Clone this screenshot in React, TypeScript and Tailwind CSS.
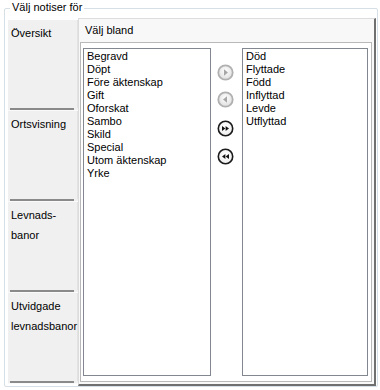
import React from 'react';

const SOURCE = ['Begravd', 'Döpt', 'Före äktenskap', 'Gift', 'Oforskat', 'Sambo', 'Skild', 'Special', 'Utom äktenskap', 'Yrke'];
const CHOSEN = ['Död', 'Flyttade', 'Född', 'Inflyttad', 'Levde', 'Utflyttad'];

const TABS = [
  { id: 'oversikt', lines: ['Översikt'] },
  { id: 'orts', lines: ['Ortsvisning'] },
  { id: 'levnad', lines: ['Levnads-', 'banor'] },
  { id: 'utvidgade', lines: ['Utvidgade', 'levnadsbanor'] },
];

// round arrow buttons between the lists
function RoundButton({ kind, disabled }: { kind: 'add' | 'remove' | 'addAll' | 'removeAll'; disabled?: boolean }) {
  const ring = disabled ? '#b0b0b0' : '#1a1a1a';
  const fill = disabled ? '#a6a6a6' : '#111111';
  return (
    <svg width="17" height="17" viewBox="0 0 17 17" className="block">
      <defs>
        <radialGradient id={`g-${kind}`} cx="50%" cy="40%" r="60%">
          <stop offset="0%" stopColor="#ffffff" />
          <stop offset="100%" stopColor={disabled ? '#dedede' : '#eeeeee'} />
        </radialGradient>
      </defs>
      <circle cx="8.5" cy="8.5" r="7.2" fill={`url(#g-${kind})`} stroke={ring} strokeWidth={disabled ? 1.8 : 1.6} />
      {kind === 'add' && <polygon points="7,5.3 11,8.5 7,11.7" fill={fill} />}
      {kind === 'remove' && <polygon points="10,5.3 6,8.5 10,11.7" fill={fill} />}
      {kind === 'addAll' && (
        <>
          <polygon points="5,6 8.4,8.5 5,11" fill={fill} />
          <polygon points="8.6,6 12,8.5 8.6,11" fill={fill} />
        </>
      )}
      {kind === 'removeAll' && (
        <>
          <polygon points="12,6 8.6,8.5 12,11" fill={fill} />
          <polygon points="8.4,6 5,8.5 8.4,11" fill={fill} />
        </>
      )}
    </svg>
  );
}

function ListBox({ items, className }: { items: string[]; className?: string }) {
  return (
    <div className={`h-[328px] border border-[#828790] bg-white pl-[3px] pt-[1px] ${className ?? ''}`}>
      {items.map(item => (
        <div key={item} className="leading-[13px] whitespace-nowrap">{item}</div>
      ))}
    </div>
  );
}

export default function App() {
  return (
    <div className="w-[380px] h-[390px] bg-white text-black text-[11px] font-['Liberation_Sans',Arial,sans-serif] pt-[8px] pl-[4px]">
      <div className="relative w-[374px] h-[379px] border border-[#d5dfe5] rounded-[2px] pt-[9px] pl-[3px]">
        <div className="absolute left-[5px] top-[-8px] bg-white px-[2px] leading-[13px]">Välj notiser för</div>

        <div className="flex w-[368px] h-[368px]">
          {/* vertical tabs */}
          <div className="w-[70px] flex flex-col pt-[2px] bg-white">
            {TABS.map(tab => (
              <div key={tab.id} className="h-[91px] flex flex-col bg-[#f0f0f0]">
                <div className="flex-1 pl-[3px] pt-[3px] border-r border-[#e2e2e2]">
                  {tab.lines.map(line => (
                    <div key={line} className="leading-[20px]">{line}</div>
                  ))}
                </div>
                <div className="ml-[2px] mr-[4px] h-[2px] bg-[#8a8a8a]" />
                <div className="h-[1px] bg-[#fafafa]" />
              </div>
            ))}
          </div>

          {/* tab page */}
          <div className="flex-1 flex flex-col border-l border-t border-[#dcdcdc] border-r-2 border-b-2 border-r-[#6f6f6f] border-b-[#6f6f6f] bg-[#f8f8f8]">
            <div className="h-[23px] pl-[6px] pt-[5px] leading-[13px]">Välj bland</div>
            <div className="ml-[1px] w-[292px] h-[340px] border border-[#b9b9b9] bg-white pl-[2px] pt-[5px] flex">
              <ListBox items={SOURCE} className="w-[128px]" />
              <div className="w-[31px] flex flex-col pl-[6px] pt-[16px]">
                <RoundButton kind="add" disabled />
                <div className="h-[10px]" />
                <RoundButton kind="remove" disabled />
                <div className="h-[12px]" />
                <RoundButton kind="addAll" />
                <div className="h-[11px]" />
                <RoundButton kind="removeAll" />
              </div>
              <ListBox items={CHOSEN} className="w-[126px]" />
            </div>
          </div>
        </div>
      </div>
    </div>
  );
}
